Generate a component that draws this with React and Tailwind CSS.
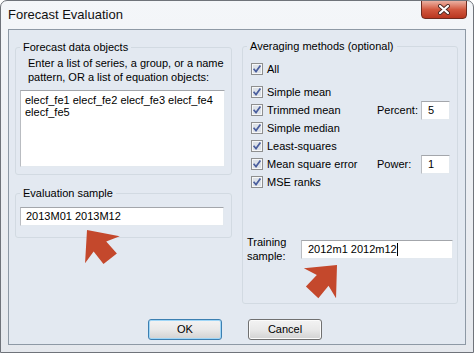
import React from 'react';

const CheckBox = () => (
  <svg width="12" height="12" viewBox="0 0 12 12" className="shrink-0">
    <rect x="0.5" y="0.5" width="11" height="11" fill="#f6f7f8" stroke="#8e8f8f" />
    <rect x="2" y="2" width="8" height="8" fill="#dde2e8" />
    <path d="M2.6 5.8 L5 8.6 L9.4 2.6" stroke="#4b5f9e" strokeWidth="1.7" fill="none" />
  </svg>
);

const CheckRow = ({ label, children }) => (
  <div className="h-[18px] flex items-center justify-between">
    <div className="flex items-center gap-[4px]">
      <CheckBox />
      <span>{label}</span>
    </div>
    {children}
  </div>
);

const SmallField = ({ label, value }) => (
  <div className="flex items-center">
    <span className="w-[44px]">{label}</span>
    <div className="w-[29px] h-[19px] bg-white border border-t-[#a3a6ab] border-l-[#b9bcc1] border-r-[#e3e9ef] border-b-[#e3e9ef] pl-[6px] leading-[17px]">
      {value}
    </div>
  </div>
);

// fat annotation arrow, drawn pointing up with the tip at 0,0
const Arrow = ({ x, y, angle }) => (
  <path
    d="M0 0 L22 25 L8 21 L9 37 L-8 37 L-8 21 L-22 25 Z"
    fill="#c4482c"
    transform={`translate(${x} ${y}) rotate(${angle})`}
  />
);

export default function App() {
  const input = 'bg-white border border-t-[#a3a6ab] border-l-[#b9bcc1] border-r-[#e3e9ef] border-b-[#e3e9ef]';
  const groupBox = 'border border-[#d2dae2] rounded-[3px] m-0 p-0 min-w-0';
  const legend = 'ml-[4px] px-[3px] leading-[14px]';

  return (
    <div className="w-[474px] h-[353px] relative overflow-hidden rounded-t-[7px] border border-[#6f737a] bg-gradient-to-b from-[#f4f6f9] to-[#e5e8ed] flex flex-col text-[11px] text-black font-['Liberation_Sans',Arial,sans-serif]">
      {/* title bar */}
      <div className="h-[28px] flex justify-between shrink-0">
        <div className="pl-[7px] pt-[6px] text-[13px] leading-[16px] text-[#111]">Forecast Evaluation</div>
        <div className="w-[46px] h-[19px] -mt-px mr-[6px] rounded-b-[4px] border border-[#6e2c20] bg-gradient-to-b from-[#eab0a2] via-[#d2583f] to-[#b9361f] flex items-center justify-center">
          <svg width="14" height="11" viewBox="0 0 14 11">
            <path d="M3 2 L11 9 M11 2 L3 9" stroke="#4a2a24" strokeWidth="4" strokeLinecap="round" />
            <path d="M3 2 L11 9 M11 2 L3 9" stroke="#ffffff" strokeWidth="2.2" strokeLinecap="round" />
          </svg>
        </div>
      </div>

      {/* client area */}
      <div className="flex-1 mx-[7px] mb-[7px] border border-[#8e99a5] bg-[#e3e9f1] flex flex-col">
        <div className="grid grid-cols-[217px_216px] gap-x-[10px] pl-[6px] pt-[9px] items-start">
          <div className="mt-[1px] flex flex-col">
            <fieldset className={`${groupBox} pb-[7px]`}>
              <legend className={legend}>Forecast data objects</legend>
              <p className="mt-[2px] ml-[12px] leading-[14px]">
                Enter a list of series, a group, or a name
                <br />
                pattern, OR a list of equation objects:
              </p>
              <div className={`${input} mt-[6px] ml-[4px] w-[205px] h-[77px] pl-[4px] pt-[3px] leading-[12px]`}>
                elecf_fe1 elecf_fe2 elecf_fe3 elecf_fe4
                <br />
                elecf_fe5
              </div>
            </fieldset>

            <fieldset className={`${groupBox} mt-[11px] pb-[11px]`}>
              <legend className={legend}>Evaluation sample</legend>
              <div className={`${input} mt-[7px] ml-[4px] w-[204px] h-[19px] pl-[5px] leading-[17px]`}>
                2013M01 2013M12
              </div>
            </fieldset>
          </div>

          <fieldset className={`${groupBox} pb-[40px]`}>
            <legend className={legend}>Averaging methods (optional)</legend>
            <div className="ml-[8px] mr-[7px] mt-[7px]">
              <CheckRow label="All" />
            </div>
            <div className="ml-[8px] mr-[7px] mt-[5px] flex flex-col">
              <CheckRow label="Simple mean" />
              <CheckRow label="Trimmed mean">
                <SmallField label="Percent:" value="5" />
              </CheckRow>
              <CheckRow label="Simple median" />
              <CheckRow label="Least-squares" />
              <CheckRow label="Mean square error">
                <SmallField label="Power:" value="1" />
              </CheckRow>
              <CheckRow label="MSE ranks" />
            </div>
            <div className="ml-[4px] mt-[44px] flex items-center">
              <span className="w-[54px] leading-[14px]">
                Training
                <br />
                sample:
              </span>
              <div className={`${input} w-[152px] h-[19px] pl-[6px] leading-[17px] flex items-center`}>
                <span>2012m1 2012m12</span>
                <span className="w-px h-[13px] bg-black" />
              </div>
            </div>
          </fieldset>
        </div>

        <div className="mt-[15px] pl-[139px] flex gap-[26px]">
          <button className="w-[74px] h-[21px] rounded-[3px] border border-[#3c7fb1] shadow-[inset_0_0_0_1px_#9fd6f7] bg-gradient-to-b from-[#f3f3f3] via-[#e9e9e9] to-[#d2d2d2] leading-[17px]">
            OK
          </button>
          <button className="w-[74px] h-[21px] rounded-[3px] border border-[#707070] shadow-[inset_0_0_0_1px_#fbfbfb] bg-gradient-to-b from-[#f3f3f3] via-[#e9e9e9] to-[#d2d2d2] leading-[17px]">
            Cancel
          </button>
        </div>
      </div>

      {/* annotation arrows */}
      <svg className="absolute inset-0 pointer-events-none" width="474" height="353" viewBox="0 0 474 353">
        <Arrow x={86} y={229} angle={-38} />
        <Arrow x={336} y={264} angle={43} />
      </svg>
    </div>
  );
}
